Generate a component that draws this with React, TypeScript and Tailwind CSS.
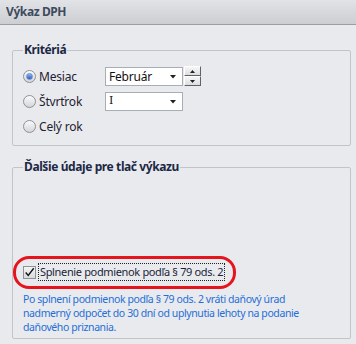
import React from "react";

const font = { fontFamily: '"Noto Sans", "Open Sans", sans-serif' };

const Radio = ({ checked, label }: { checked?: boolean; label: string }) => (
  <div className="flex items-center gap-[3px] w-[82px]">
    <div className="w-[13px] h-[13px] rounded-full border border-[#8d9196] bg-gradient-to-b from-[#fbfbfb] to-[#d3d5d8] flex items-center justify-center">
      {checked && (
        <div className="w-[7px] h-[7px] rounded-full bg-gradient-to-b from-[#8fb4f0] to-[#2a5cc4] border border-[#6b8fd0]" />
      )}
    </div>
    <span className="text-[12px] text-[#1e2230] tracking-[-0.2px]">{label}</span>
  </div>
);

const Combo = ({ value, serif }: { value: string; serif?: boolean }) => (
  <div className="w-[78px] h-[19px] bg-white border border-[#a8aeb6] flex items-center justify-between pl-[3px] pr-[6px]">
    <span className="text-[12px] text-[#111] tracking-[-0.2px]" style={serif ? { fontFamily: '"DejaVu Serif", serif', fontSize: 11 } : undefined}>
      {value}
    </span>
    <svg width="6" height="4" viewBox="0 0 6 4">
      <path d="M0 0 H6 L3 3.5 Z" fill="#222" />
    </svg>
  </div>
);

const SpinBtn = ({ up }: { up?: boolean }) => (
  <div className="w-[17px] h-[10px] bg-gradient-to-b from-[#f7f7f8] to-[#dcdde0] border border-t-[#fff] border-l-[#fff] border-b-[#5f6266] border-r-[#5f6266] flex items-center justify-center">
    <svg width="5" height="3" viewBox="0 0 5 3">
      {up ? <path d="M0 3 H5 L2.5 0 Z" fill="#222" /> : <path d="M0 0 H5 L2.5 3 Z" fill="#222" />}
    </svg>
  </div>
);

export default function App() {
  return (
    <div className="w-[356px] h-[344px] bg-[#e9eaee] flex flex-col overflow-hidden" style={font}>
      <div className="h-[25px] shrink-0 bg-gradient-to-b from-[#e2e3e6] to-[#cdced2] border-b border-[#9c9ea3] flex items-center px-[6px]">
        <span className="text-[12px] font-bold text-[#3d4b5e] tracking-[-0.4px]">Výkaz DPH</span>
      </div>

      <fieldset className="ml-[12px] mr-[5px] mt-[17px] border border-[#c3c4c8] rounded-[2px] pl-[10px] pb-[6px]">
        <legend className="px-[1px] text-[12px] leading-[16px] font-bold text-[#1c2844] tracking-[-0.4px]">Kritériá</legend>
        <div className="flex flex-col pt-[6px]">
          <div className="h-[25px] flex items-center">
            <Radio checked label="Mesiac" />
            <Combo value="Február" />
            <div className="flex flex-col ml-[1px] -mt-[1px]">
              <SpinBtn up />
              <SpinBtn />
            </div>
          </div>
          <div className="h-[25px] flex items-center">
            <Radio label="Štvrťrok" />
            <Combo value="I" serif />
          </div>
          <div className="h-[25px] flex items-center">
            <Radio label="Celý rok" />
          </div>
        </div>
      </fieldset>

      <fieldset className="ml-[12px] mr-[5px] mt-[13px] border border-[#c3c4c8] rounded-[2px] pl-[10px] pb-[4px]">
        <legend className="px-[1px] text-[12px] leading-[16px] font-bold text-[#1c2844] tracking-[-0.4px]">Ďalšie údaje pre tlač výkazu</legend>
        <div className="relative mt-[88px] flex items-center h-[18px]">
          <div className="w-[13px] h-[13px] border border-[#8f9297] bg-gradient-to-b from-[#f4f4f5] to-[#d9dadd] flex items-center justify-center">
            <svg width="13" height="13" viewBox="0 0 13 13">
              <path d="M2 6.5 L5 10 L11.5 1.5" stroke="#111" strokeWidth="1.6" fill="none" />
            </svg>
          </div>
          <span className="ml-[2px] h-[18px] flex items-center px-[1px] border border-dotted border-[#222] text-[11px] text-[#1b1e36] whitespace-nowrap tracking-[-0.35px]">
            Splnenie podmienok podľa § 79 ods. 2
          </span>
          <div className="absolute -left-[10px] -top-[7px] w-[223px] h-[33px] border-[3px] border-[#e5141d] rounded-[16px]" />
        </div>
        <div className="mt-[11px] text-[10.5px] leading-[14px] text-[#1e6fd6] whitespace-nowrap tracking-[-0.4px]">
          Po splnení podmienok podľa § 79 ods. 2 vráti daňový úrad
          <br />
          nadmerný odpočet do 30 dní od uplynutia lehoty na podanie
          <br />
          daňového priznania.
        </div>
      </fieldset>
    </div>
  );
}
